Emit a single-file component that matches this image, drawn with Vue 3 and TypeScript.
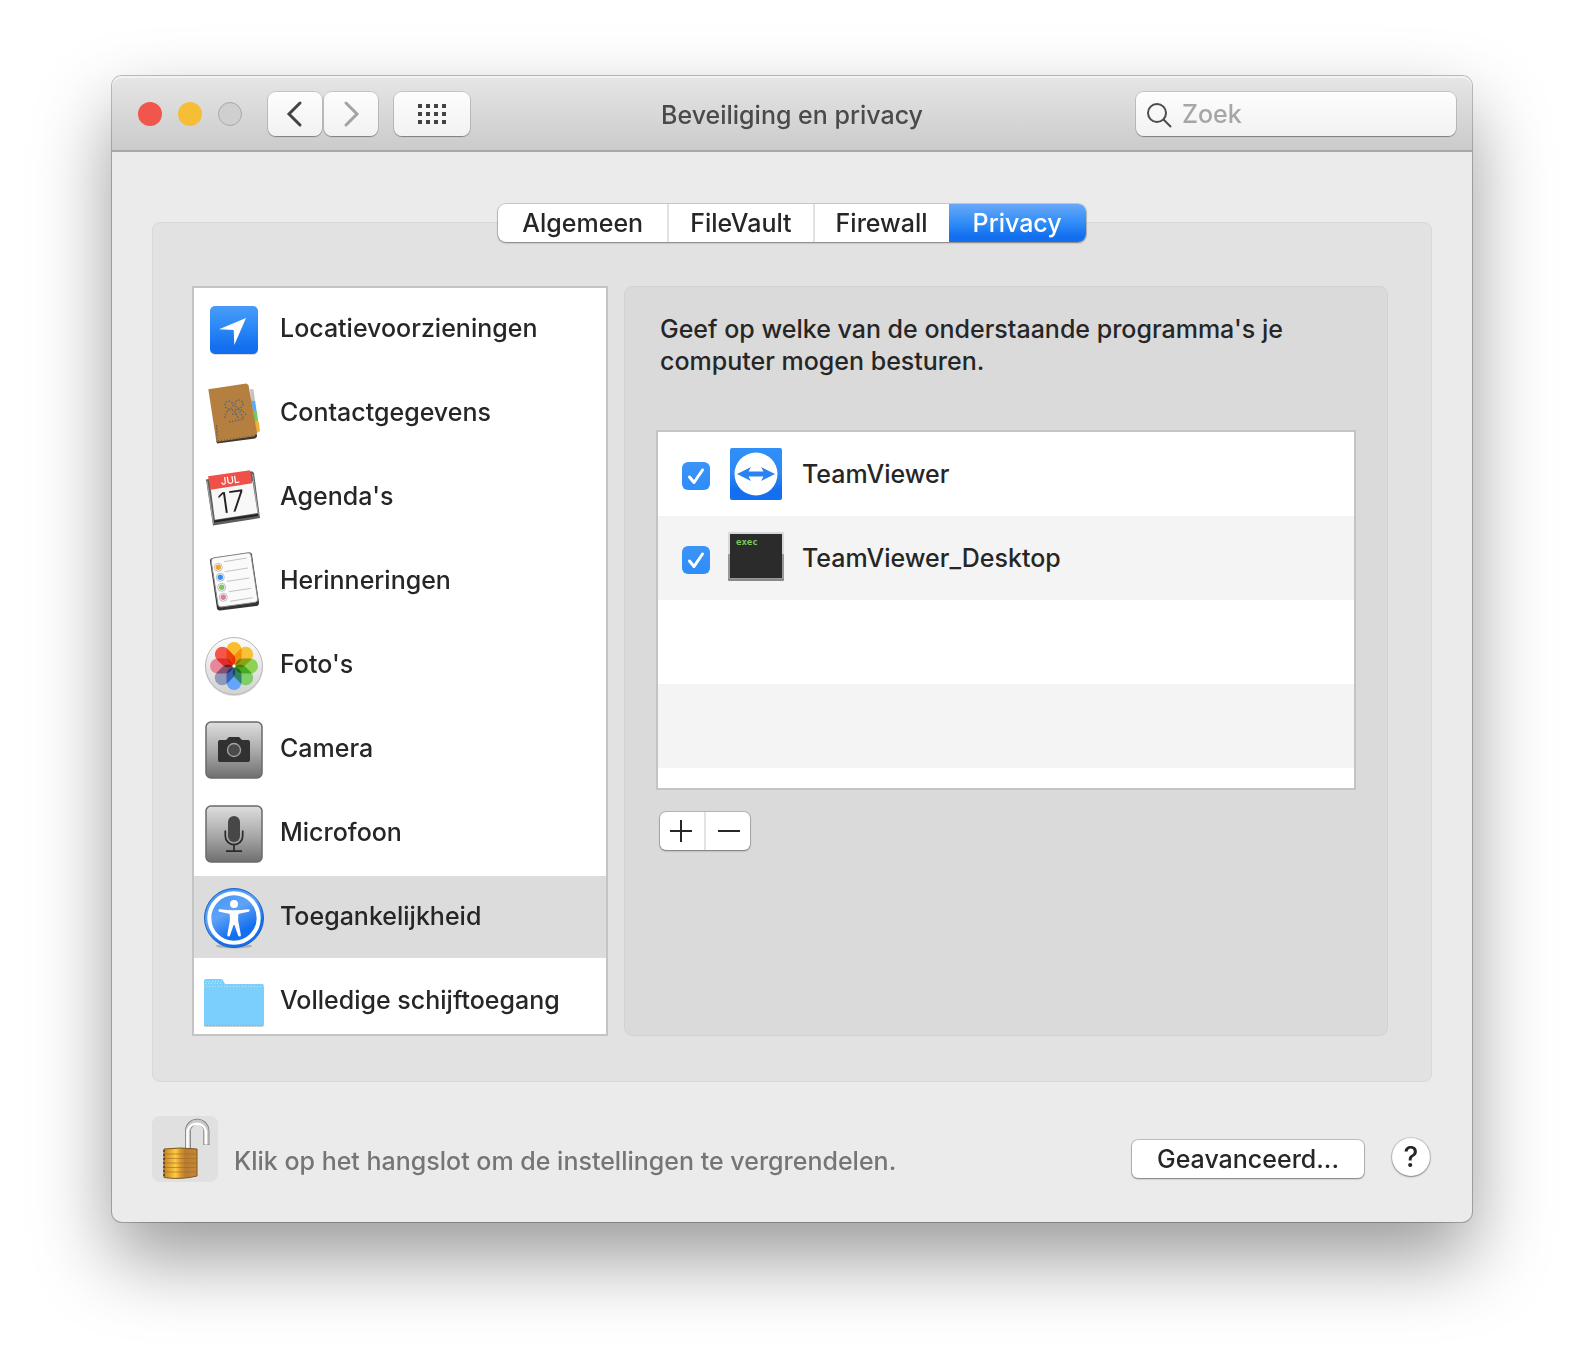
<script setup lang="ts">
import { ref } from 'vue'

interface Category {
  id: string
  label: string
}

interface AppEntry {
  id: string
  label: string
  allowed: boolean
}

const tabs = ['Algemeen', 'FileVault', 'Firewall', 'Privacy']
const activeTab = ref('Privacy')

const categories: Category[] = [
  { id: 'location', label: 'Locatievoorzieningen' },
  { id: 'contacts', label: 'Contactgegevens' },
  { id: 'calendar', label: "Agenda's" },
  { id: 'reminders', label: 'Herinneringen' },
  { id: 'photos', label: "Foto's" },
  { id: 'camera', label: 'Camera' },
  { id: 'microphone', label: 'Microfoon' },
  { id: 'accessibility', label: 'Toegankelijkheid' },
  { id: 'disk', label: 'Volledige schijftoegang' },
]
const activeCategory = ref('accessibility')

const apps = ref<AppEntry[]>([
  { id: 'teamviewer', label: 'TeamViewer', allowed: true },
  { id: 'exec', label: 'TeamViewer_Desktop', allowed: true },
])

const petals = ['#f9bd30', '#f9c236', '#8ed253', '#7fce68', '#62a5fa', '#9298ba', '#e88799', '#f4554c']
const search = ref('')
</script>

<template>
  <main class="desktop">
    <section class="window">
      <header class="titlebar">
        <div class="controls">
          <div class="lights">
            <button class="light red" aria-label="Sluit"></button>
            <button class="light yellow" aria-label="Minimaliseer"></button>
            <button class="light off" aria-label="Zoom" disabled></button>
          </div>
          <div class="nav">
            <button class="tool" aria-label="Vorige">
              <svg width="24" height="30" viewBox="0 0 24 30"><path d="M17 4 6 15l11 11" fill="none" stroke="#434343" stroke-width="3" stroke-linecap="round" stroke-linejoin="miter" /></svg>
            </button>
            <button class="tool" aria-label="Volgende">
              <svg width="24" height="30" viewBox="0 0 24 30"><path d="m7 4 11 11L7 26" fill="none" stroke="#a3a3a3" stroke-width="3" stroke-linecap="round" stroke-linejoin="miter" /></svg>
            </button>
          </div>
          <button class="tool wide" aria-label="Toon alles">
            <svg width="28" height="20" viewBox="0 0 28 20" fill="#434343">
              <template v-for="r in 3" :key="r">
                <rect v-for="c in 4" :key="c" :x="(c - 1) * 8" :y="(r - 1) * 8" width="4" height="4" />
              </template>
            </svg>
          </button>
        </div>
        <h1 class="title">Beveiliging en privacy</h1>
        <label class="search">
          <svg width="28" height="28" viewBox="0 0 28 28" fill="none" stroke="#4b4b4b" stroke-width="2"><circle cx="11" cy="13" r="9" /><path d="m17 19 8 8" /></svg>
          <input v-model="search" type="text" placeholder="Zoek" aria-label="Zoek" />
        </label>
      </header>

      <div class="body">
        <nav class="tabs">
          <button v-for="tab in tabs" :key="tab" class="tab" :class="{ active: tab === activeTab }" @click="activeTab = tab">{{ tab }}</button>
        </nav>

        <div class="group">
          <ul class="categories">
            <li v-for="c in categories" :key="c.id">
              <button class="category" :class="{ active: c.id === activeCategory }" @click="activeCategory = c.id">
                <svg width="64" height="64" viewBox="0 0 64 64" aria-hidden="true">
                  <g v-if="c.id === 'location'">
                    <rect x="8" y="10" width="48" height="48" rx="5" fill="#000" opacity=".15" />
                    <rect x="8" y="9" width="48" height="48" rx="5" fill="url(#blue)" />
                    <path d="M17 32.3 44 21 32.3 48l-.6-15z" fill="#fff" />
                  </g>
                  <g v-else-if="c.id === 'contacts'">
                    <path d="m14.500 58 40-6 .6 3.500-2 2L15 62.600z" fill="#3d3831" />
                    <path d="m48 8 3.500.5L53 20h-4z" fill="#c3c3c3" />
                    <path d="m49 20 4.200 0 1.300 10H51z" fill="#5aa9f7" />
                    <path d="M51 30h3.800l1.400 10.700H52z" fill="#77c95a" />
                    <path d="M53 40.700h3.800L58 50l-4 2.500z" fill="#f0b13c" />
                    <path d="m6.300 8.300 38-5.700 2.200 1.400L55 51.500l-2.600 3.700-38 5.800z" fill="#b5803f" />
                    <path d="m14.500 44 1.700 16.500-1.700.4zM16 60l36-5.500" fill="none" stroke="#5f5a52" stroke-dasharray="1 2" />
                    <g fill="none" stroke="#5f6671" stroke-width="1.500" stroke-dasharray="1.500 1.500">
                      <circle cx="27" cy="24" r="4" /><circle cx="37" cy="23" r="4" />
                      <path d="M23 37c0-6 3-8 6-8s5 2 7 8M33 29c3-3 9 1 11 5M27 41l15-3M30 33h6M36 28l6 10" />
                    </g>
                  </g>
                  <g v-else-if="c.id === 'calendar'">
                    <path d="M4 14.500 50 6.300l2 1.700 6 45-47 7.500z" fill="#5c5f5e" />
                    <path d="m5 16 6.500 42.500M56.500 51 50.500 9" stroke="#a9abaa" fill="none" />
                    <path d="m12 56.500 44.500-6.700" stroke="#222" stroke-width="2" />
                    <path d="m8.500 22 42-6 5 32-42.600 6.700z" fill="#f8f8f8" />
                    <path d="m6 11.300 42-6 2.200 13-41.500 6.400z" fill="#ef5148" />
                    <text x="28.500" y="18.800" transform="rotate(-8 28.500 18.800)" text-anchor="middle" font-size="10" fill="#fff">JUL</text>
                    <text x="31" y="47" transform="rotate(-8 31 47)" text-anchor="middle" font-size="29" font-weight="300" fill="#222">17</text>
                  </g>
                  <g v-else-if="c.id === 'reminders'">
                    <path d="m10 9 37.500-5.500q2-.2 2.400 1.800L57 53.500q.2 3-2 3.500l-37 4.500q-2.500.2-3-2L8 12q-.2-2.500 2-3z" fill="#333" />
                    <path d="m12 8.800 34-5q2.700-.2 3 2.200l6.700 44q.2 2.800-2.500 3.300l-34 4.700q-2.700.3-3.200-2.300L9.200 12.500Q9 9.300 12 8.800z" fill="#fafafa" stroke="#888" stroke-width="1" />
                    <path d="m22 12.700 22.700-3.700M22.700 22.700 46 19M25 32.300l22.300-3.300M26.700 42.700l22.600-3.400M28 52.300l22.700-3.600" stroke="#c4c4c4" />
                    <g stroke="#bcbcbc" fill="#fff"><circle cx="16.300" cy="18.300" r="4" /><circle cx="18.300" cy="28.300" r="4" /><circle cx="19.700" cy="38.300" r="4" /><circle cx="21.300" cy="48.300" r="4" /></g>
                    <circle cx="16.300" cy="18.300" r="2.700" fill="#f0a62c" /><circle cx="18.300" cy="28.300" r="2.700" fill="#2f90f8" />
                    <circle cx="19.700" cy="38.300" r="2.700" fill="#7bcb58" /><circle cx="21.300" cy="48.300" r="2.700" fill="#e27f8f" />
                  </g>
                  <g v-else-if="c.id === 'photos'">
                    <circle cx="32" cy="34" r="29" fill="#000" opacity=".15" />
                    <circle cx="32" cy="33" r="28.500" fill="url(#pearl)" stroke="#b9b9b9" />
                    <g transform="translate(32 33)" class="petals">
                      <rect v-for="(p, i) in petals" :key="i" x="-7.500" y="-24" width="15" height="23" rx="7.500" :fill="p" :transform="`rotate(${i * 45})`" />
                    </g>
                    <circle cx="32" cy="33" r="1.500" fill="#fff" />
                  </g>
                  <g v-else-if="c.id === 'camera'">
                    <rect x="4" y="5" width="56" height="56" rx="5" fill="url(#steel)" stroke="#6a6a6a" stroke-width="1.500" />
                    <path d="M18 23h6l3-3h10l3 3h6q2 0 2 2v18q0 2-2 2H18q-2 0-2-2V25q0-2 2-2z" fill="#313131" />
                    <circle cx="32" cy="33" r="6.500" fill="#4b4b4b" stroke="#a5a5a5" stroke-width="1.300" />
                  </g>
                  <g v-else-if="c.id === 'microphone'">
                    <rect x="4" y="5" width="56" height="56" rx="5" fill="url(#steel)" stroke="#6a6a6a" stroke-width="1.500" />
                    <rect x="26" y="15" width="12" height="26" rx="6" fill="#474747" />
                    <path d="M23.300 29.500V35a8.700 8.700 0 0 0 17.400 0v-5.500M32 44v6M24 50.200h16" fill="none" stroke="#2a2a2a" stroke-width="1.700" />
                  </g>
                  <g v-else-if="c.id === 'accessibility'">
                    <ellipse cx="32" cy="61" rx="18" ry="2.500" fill="#000" opacity=".2" />
                    <circle cx="32" cy="33" r="29.500" fill="url(#sphere)" stroke="#1b62c4" />
                    <circle cx="32" cy="33" r="24.700" fill="none" stroke="#fff" stroke-width="4" />
                    <circle cx="32" cy="19" r="4" fill="#fff" />
                    <path d="M18 24.200q14 2 28 0 1.700 0 1.700 1.300 0 1-1.200 1.300L37 28.700q-.8.300-.8 1.300v6l2.700 14q0 1.500-1.300 1.500-1 0-1.500-1L32.500 40h-1L28 50.500q-.5 1-1.500 1-1.400 0-1.300-1.500L27.800 36v-6q0-1-.8-1.300l-9.500-1.900q-1.200-.3-1.200-1.300 0-1.300 1.700-1.300z" fill="#fff" />
                  </g>
                  <g v-else>
                    <path d="M4 58h56q2 0 2-2v-2H2v2q0 2 2 2z" fill="#000" opacity=".2" />
                    <path d="M4 10h15q2 0 3 3t3 2h35q2 0 2 2v38q0 2-2 2H4q-2 0-2-2V12q0-2 2-2z" fill="#7acffc" />
                    <path d="M4 12.500h16M3 14.500h18M4 17.500h58" stroke="#c9e3ee" stroke-dasharray="1 2" fill="none" />
                    <path d="M2 56.300h60" stroke="#66b3ee" stroke-dasharray="1 2" fill="none" />
                  </g>
                </svg>
                <span>{{ c.label }}</span>
              </button>
            </li>
          </ul>

          <div class="panel">
            <p class="hint">Geef op welke van de onderstaande programma's je computer mogen besturen.</p>
            <ul class="apps">
              <li v-for="a in apps" :key="a.id">
                <label class="app">
                  <span class="check">
                    <input v-model="a.allowed" type="checkbox" />
                    <svg v-show="a.allowed" width="28" height="28" viewBox="0 0 28 28"><path d="m7.500 15 4.500 5.500L20.500 8" fill="none" stroke="#fff" stroke-width="3" stroke-linecap="round" stroke-linejoin="round" /></svg>
                  </span>
                  <svg width="60" height="60" viewBox="0 0 60 60" aria-hidden="true">
                    <g v-if="a.id === 'teamviewer'">
                      <rect x="4" y="4" width="52" height="52" rx="2" fill="url(#tv)" />
                      <circle cx="30" cy="30" r="21.500" fill="#fff" />
                      <path d="m11 30 14-7-2.500 4.500h15L35 23l14 7-14 7 2.500-4.500h-15L25 37z" fill="#2a83f0" />
                    </g>
                    <g v-else>
                      <rect x="2" y="5" width="56" height="48" rx="1" fill="#888" />
                      <rect x="2" y="4" width="56" height="46" rx="1" fill="#d8d8d8" />
                      <rect x="2" y="26" width="56" height="25" rx="1" fill="#999" />
                      <rect x="4" y="6" width="52" height="44" fill="#2b2b2b" />
                      <text x="10" y="17" font-size="9" font-weight="700" font-family="'DejaVu Sans Mono', monospace" fill="#79cb5a">exec</text>
                    </g>
                  </svg>
                  <span>{{ a.label }}</span>
                </label>
              </li>
              <li></li>
              <li></li>
            </ul>
            <div class="edit">
              <button aria-label="Voeg toe"><svg width="22" height="22" viewBox="0 0 22 22"><path d="M0 11h22M11 0v22" stroke="#262626" stroke-width="2" /></svg></button>
              <button aria-label="Verwijder"><svg width="22" height="22" viewBox="0 0 22 22"><path d="M0 11h22" stroke="#262626" stroke-width="2" /></svg></button>
            </div>
          </div>
        </div>

        <footer class="footer">
          <button class="lock" aria-label="Vergrendel">
            <svg width="66" height="66" viewBox="0 0 66 66">
              <path d="M36 34V15a9.200 9.200 0 0 1 18.400 0v14" fill="none" stroke="#777" stroke-width="6" />
              <path d="M36 34V15a9.200 9.200 0 0 1 18.400 0v13.500" fill="none" stroke="#c9c9c9" stroke-width="4.500" />
              <path d="M35.500 34V15a9.500 9.500 0 0 1 18.400 0v13.500" fill="none" stroke="#fff" stroke-width="2.500" />
              <path d="M12 33q17-2 33 0v27q-16 4-33 1.500z" fill="url(#brass)" stroke="#7c5523" />
              <path d="M12 38h33M12 42.500h33M12 47h33M12 51.500h33M12 56h33" stroke="#a06a20" stroke-width="1.200" opacity=".6" />
              <path d="M12 34v27" stroke="#5b3d2c" stroke-width="1.500" stroke-dasharray="2 2" />
            </svg>
          </button>
          <p class="note">Klik op het hangslot om de instellingen te vergrendelen.</p>
          <button class="advanced">Geavanceerd...</button>
          <button class="help" aria-label="Help">?</button>
        </footer>
      </div>
    </section>

    <svg class="defs" width="0" height="0" aria-hidden="true">
      <defs>
        <linearGradient id="blue" x1="0" y1="0" x2="0" y2="1"><stop offset="0" stop-color="#4a9bf8" /><stop offset=".4" stop-color="#2e8bf7" /><stop offset=".85" stop-color="#146fef" /></linearGradient>
        <linearGradient id="tv" x1="0" y1="0" x2="0" y2="1"><stop offset="0" stop-color="#3090f8" /><stop offset=".5" stop-color="#2b87f5" /><stop offset=".8" stop-color="#146fef" /></linearGradient>
        <linearGradient id="pearl" x1="0" y1="0" x2="0" y2="1"><stop offset="0" stop-color="#fcfcfc" /><stop offset="1" stop-color="#d2d2d2" /></linearGradient>
        <linearGradient id="steel" x1="0" y1="0" x2="0" y2="1"><stop offset="0" stop-color="#dedede" /><stop offset=".55" stop-color="#a6a6a6" /><stop offset="1" stop-color="#6f6f6f" /></linearGradient>
        <linearGradient id="sphere" x1=".2" y1="0" x2=".7" y2="1"><stop offset="0" stop-color="#3f93f6" /><stop offset=".4" stop-color="#5fa3f8" /><stop offset=".75" stop-color="#146fef" /></linearGradient>
        <linearGradient id="brass"><stop offset="0" stop-color="#c98422" /><stop offset=".35" stop-color="#fccb45" /><stop offset=".5" stop-color="#d9972f" /><stop offset=".65" stop-color="#b87c33" /><stop offset="1" stop-color="#c58a35" /></linearGradient>
      </defs>
    </svg>
  </main>
</template>

<style>
body {
  background: #fff;
}
</style>

<style scoped>
* {
  box-sizing: border-box;
}

.desktop {
  padding: 76px 112px 148px;
  overflow: hidden;
  font-family: Inter, 'Liberation Sans', sans-serif;
  font-size: 25px;
  font-weight: 450;
  line-height: 32px;
  color: #262626;
}

button,
input {
  margin: 0;
  padding: 0;
  border: 0;
  font: inherit;
  color: inherit;
}

button {
  display: flex;
  align-items: center;
  justify-content: center;
}

ul,
p,
h1 {
  margin: 0;
  padding: 0;
  list-style: none;
}

svg {
  display: block;
  flex: none;
}

.defs {
  position: absolute;
}

.window {
  border-radius: 10px;
  background: #ebebeb;
  box-shadow: 0 0 0 1px rgba(0, 0, 0, 0.24), 0 36px 78px rgba(0, 0, 0, 0.4);
}

.titlebar {
  display: grid;
  grid-template-columns: 1fr auto 1fr;
  align-items: center;
  height: 76px;
  padding: 2px 16px 0;
  border-bottom: 2px solid #a8a8a8;
  border-radius: 10px 10px 0 0;
  background: linear-gradient(#e6e6e6, #cbcbcb);
  box-shadow: inset 0 2px #f2f2f2;
}

.controls,
.lights,
.nav {
  display: flex;
  align-items: center;
}

.controls {
  gap: 16px;
}

.lights {
  gap: 16px;
  margin: 0 10px;
}

.light {
  width: 24px;
  height: 24px;
  border-radius: 50%;
}

.red {
  background: #f0564c;
}

.yellow {
  background: #f6be37;
}

.off {
  border: 1px solid #a9a9a9;
  background: #cfcfcf;
}

.nav {
  gap: 2px;
}

.tool {
  width: 54px;
  height: 44px;
  border-radius: 8px;
  background: linear-gradient(#fdfdfd, #f2f2f2);
  box-shadow: 0 0 0 1px rgba(0, 0, 0, 0.12), 0 1px 1px rgba(0, 0, 0, 0.3);
}

.wide {
  width: 76px;
}

.title {
  padding-top: 2px;
  font-size: 25px;
  font-weight: 450;
  color: #4a4a4a;
}

.search {
  display: flex;
  align-items: center;
  justify-self: end;
  gap: 8px;
  width: 320px;
  height: 44px;
  padding: 0 10px;
  border-radius: 8px;
  background: linear-gradient(#fdfdfd, #f2f2f2);
  box-shadow: 0 0 0 1px rgba(0, 0, 0, 0.12), 0 1px 1px rgba(0, 0, 0, 0.3);
}

.search input {
  flex: 1;
  min-width: 0;
  background: none;
  outline: none;
}

.search input::placeholder {
  color: #a6a6a6;
  opacity: 1;
}

.body {
  padding: 52px 40px 40px;
}

.tabs {
  position: relative;
  display: flex;
  width: max-content;
  margin: 0 auto -20px;
  border-radius: 8px;
  background: #fff;
  box-shadow: 0 0 0 1px rgba(0, 0, 0, 0.14), 0 1px 2px rgba(0, 0, 0, 0.35);
}

.tab {
  height: 38px;
  padding: 0 21px;
  background: none;
}

.tab + .tab {
  border-left: 2px solid #e2e2e2;
}

.tab:first-child {
  padding: 0 24px;
}

.tab + .tab.active {
  border-left: 0;
  padding: 0 24px;
  border-radius: 0 8px 8px 0;
  background: linear-gradient(#6aa8f8, #2f8df7 50%, #146fef 85%);
  color: #fff;
}

.group {
  display: flex;
  gap: 16px;
  padding: 63px 43px 45px 39px;
  border: 1px solid #d8d8d8;
  border-radius: 8px;
  background: #e2e2e2;
}

.categories {
  flex: none;
  width: 416px;
  height: 750px;
  overflow: hidden;
  border: 2px solid #c4c4c4;
  background: #fff;
}

.categories li {
  margin-bottom: 2px;
}

.category {
  justify-content: flex-start;
  gap: 14px;
  width: 100%;
  height: 82px;
  padding-left: 8px;
  background: none;
  white-space: nowrap;
}

.category span {
  padding-bottom: 2px;
}

.category.active {
  background: #dcdcdc;
}

.petals {
  isolation: isolate;
}

.petals rect {
  mix-blend-mode: multiply;
}

.panel {
  flex: 1;
  min-width: 0;
  padding: 26px 31px;
  border: 1px solid #d2d2d2;
  border-radius: 8px;
  background: #dadada;
}

.hint {
  max-width: 670px;
  padding: 0 4px;
}

.apps {
  margin-top: 53px;
  padding-bottom: 20px;
  border: 2px solid #c4c4c4;
  background: #fff;
}

.apps li {
  height: 84px;
}

.apps li:nth-child(even) {
  background: #f4f4f4;
}

.app {
  display: flex;
  align-items: center;
  gap: 16px;
  height: 100%;
  padding-left: 24px;
}

.check {
  display: grid;
  margin-top: 4px;
}

.check input,
.check svg {
  grid-area: 1 / 1;
}

.check svg {
  pointer-events: none;
}

.check input {
  width: 28px;
  height: 28px;
  appearance: none;
  border-radius: 6px;
  background: #fff;
}

.check input:checked {
  background: linear-gradient(#3b94f9, #2e8df8);
}

.edit {
  display: flex;
  width: max-content;
  margin: 22px 0 0 4px;
  border-radius: 6px;
  background: #fff;
  box-shadow: 0 0 0 1px rgba(0, 0, 0, 0.16), 0 1px 2px rgba(0, 0, 0, 0.35);
}

.edit button {
  width: 44px;
  height: 38px;
  padding-right: 2px;
  background: none;
}

.edit button + button {
  width: 46px;
  padding: 0 0 0 2px;
  border-left: 2px solid #e2e2e2;
}

.footer {
  display: flex;
  align-items: flex-end;
  margin-top: 34px;
}

.lock {
  width: 66px;
  height: 66px;
  border-radius: 8px;
  background: #e0e0e0;
}

.note {
  flex: 1;
  padding: 0 16px 5px;
  color: #757575;
}

.advanced {
  width: 232px;
  height: 38px;
  margin-bottom: 4px;
  border-radius: 6px;
  background: #fff;
  box-shadow: 0 0 0 1px rgba(0, 0, 0, 0.18), 0 1px 2px rgba(0, 0, 0, 0.35);
}

.help {
  width: 38px;
  height: 38px;
  margin: 0 2px 6px 28px;
  border-radius: 50%;
  background: #fff;
  box-shadow: 0 0 0 1px rgba(0, 0, 0, 0.14), 0 1px 2px rgba(0, 0, 0, 0.35);
  font-size: 28px;
}
</style>
